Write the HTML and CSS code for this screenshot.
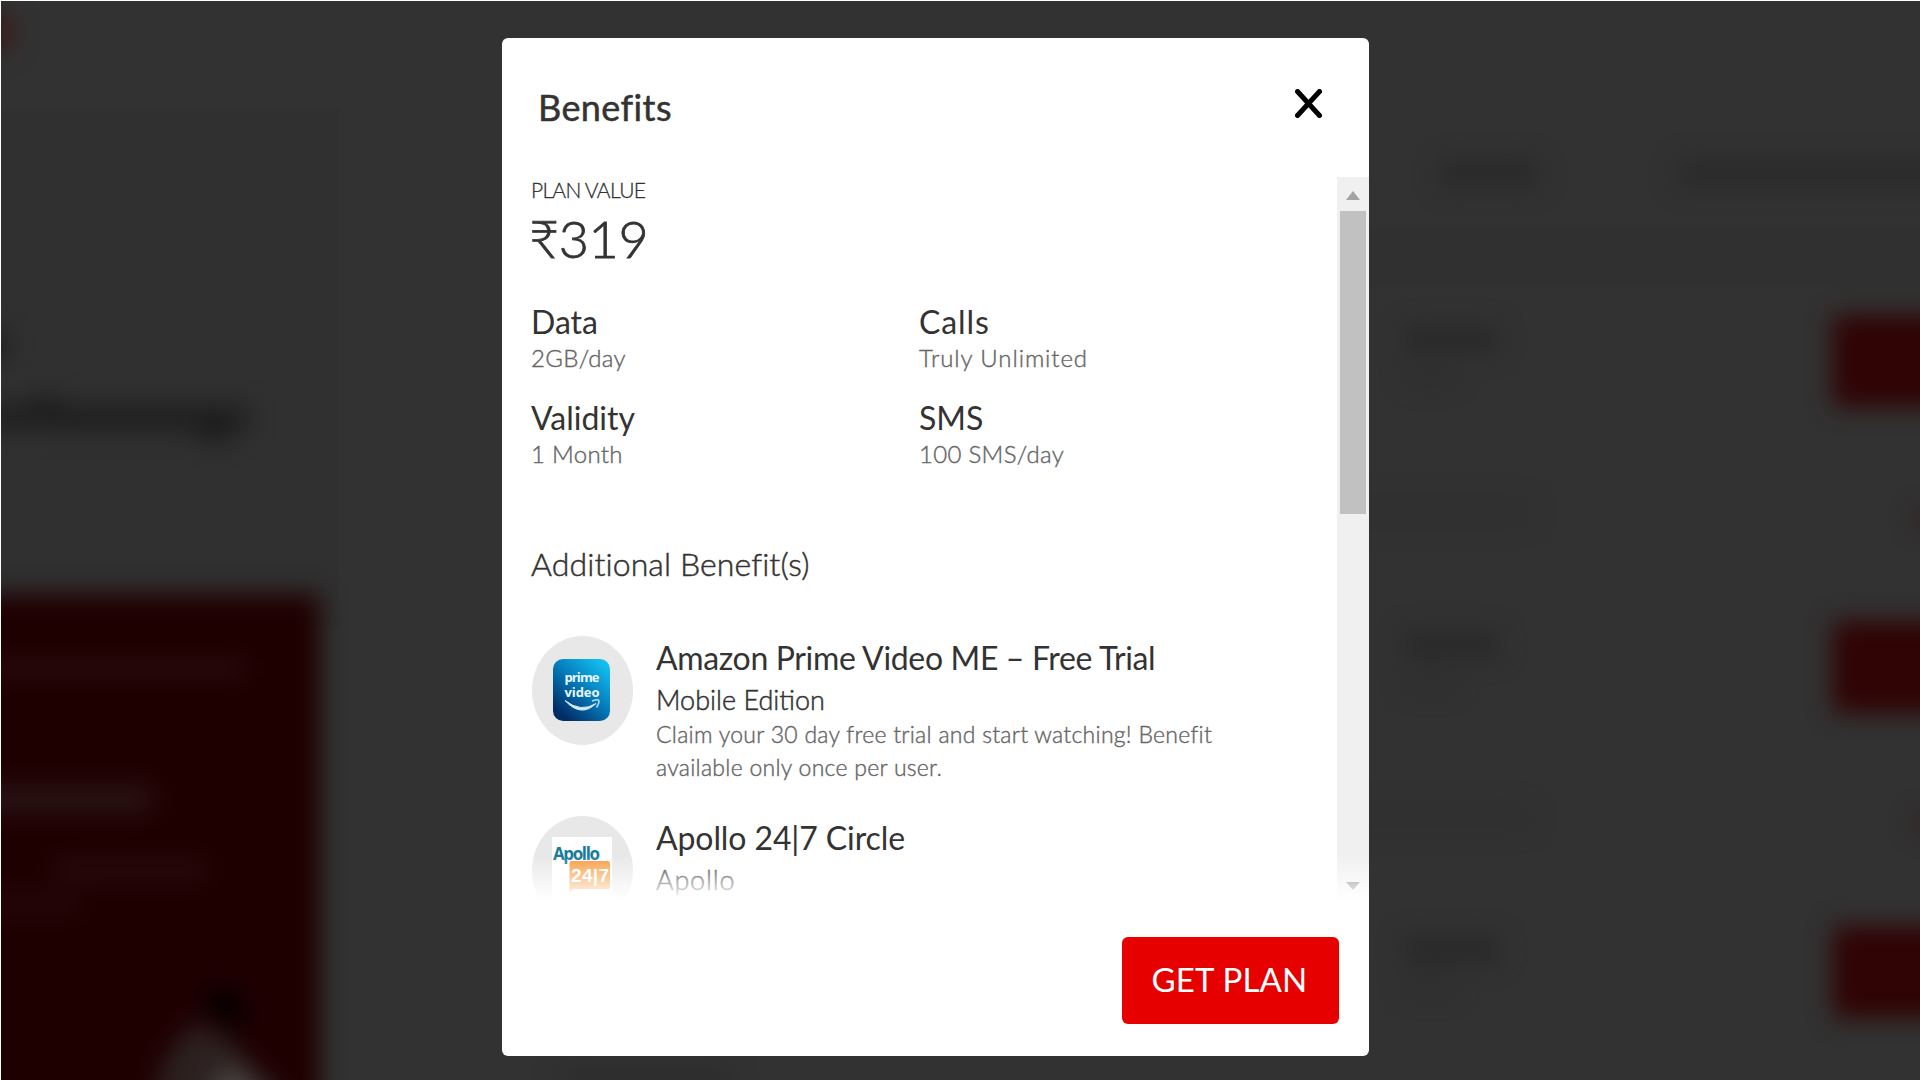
FILE: index.html
```
<!DOCTYPE html>
<html lang="en">
<head>
  <meta charset="UTF-8">
  <title>Benefits</title>
  <link rel="stylesheet" href="styles.css">
</head>
<body>

<!-- blurred page behind the modal -->
<svg class="backdrop" viewBox="0 0 1920 1080" aria-hidden="true">
  <defs>
    <filter id="blur" filterUnits="userSpaceOnUse" x="-60" y="-60" width="2040" height="1200" color-interpolation-filters="sRGB">
      <feGaussianBlur stdDeviation="12"/>
    </filter>
  </defs>
  <rect width="1920" height="1080" fill="#323232"/>
  <rect y="108" width="339" height="520" fill="#303030"/>
  <rect x="1369" y="227" width="551" height="60" fill="#303030"/>
  <g filter="url(#blur)">
    <circle cx="-8" cy="32" r="22" fill="#3c1a1a"/>
    <circle cx="-8" cy="345" r="15" fill="#1c1c1c"/>
    <rect x="-40" y="406" width="95" height="22" fill="#1e1e1e"/>
    <rect x="30" y="396" width="30" height="30" fill="#1e1e1e"/>
    <rect x="55" y="406" width="193" height="24" fill="#1e1e1e"/>
    <circle cx="215" cy="427" r="17" fill="#1c1c1c"/>
    <rect x="-60" y="594" width="380" height="560" fill="#1f0001"/>
    <rect x="-40" y="658" width="286" height="20" fill="#280a0c"/>
    <rect x="-40" y="786" width="192" height="26" fill="#2a1414"/>
    <rect x="55" y="860" width="150" height="20" fill="#280b0d"/>
    <rect x="-40" y="895" width="120" height="18" fill="#27080a"/>
    <path d="M202 990 L232 988 L250 1015 L235 1032 L208 1010 Z" fill="#060000"/>
    <path d="M150 1100 L168 1055 L195 1022 L228 1040 L288 1100 Z" fill="#2c2120"/>
    <path d="M195 1110 L230 1062 L280 1110 Z" fill="#484444"/>
    <rect x="1441" y="161" width="96" height="26" fill="#292929"/>
    <rect x="1678" y="161" width="300" height="26" fill="#2a2a2a"/>
    <rect x="1403" y="326" width="94" height="26" fill="#292929"/>
    <rect x="1408" y="368" width="45" height="14" fill="#2c2c2c"/>
    <rect x="1340" y="504" width="188" height="16" fill="#2e2e2e"/>
    <rect x="1403" y="632" width="96" height="26" fill="#292929"/>
    <rect x="1408" y="675" width="45" height="14" fill="#2c2c2c"/>
    <rect x="1340" y="810" width="188" height="16" fill="#2e2e2e"/>
    <rect x="1403" y="937" width="96" height="26" fill="#292929"/>
    <rect x="1408" y="979" width="45" height="14" fill="#2c2c2c"/>
    <rect x="560" y="1072" width="170" height="18" fill="#2a2a2a"/>
    <rect x="1833" y="315" width="180" height="92" fill="#300304"/>
    <rect x="1833" y="621" width="180" height="92" fill="#300304"/>
    <rect x="1833" y="926" width="180" height="92" fill="#300304"/>
    <circle cx="1924" cy="518" r="9" fill="#311717"/>
    <circle cx="1924" cy="823" r="9" fill="#311717"/>
  </g>
  <path d="M0 .5H1920M.5 0V1080" stroke="#fff"/>
</svg>

<div class="modal">
  <div class="modal-header">
    <h2>Benefits</h2>
    <button class="close" aria-label="Close">
      <svg width="27" height="29" viewBox="0 0 27 29">
        <path d="M2.5 2.5 L24.5 26.5 M24.5 2.5 L2.5 26.5" stroke="#000" stroke-width="5" stroke-linecap="round"/>
      </svg>
    </button>
  </div>

  <div class="modal-body">
    <div class="content">
      <p class="plan-label">PLAN VALUE</p>
      <p class="plan-price">₹319</p>

      <div class="details">
        <div>
          <h3>Data</h3>
          <p>2GB/day</p>
        </div>
        <div>
          <h3 class="wide">Calls</h3>
          <p class="wide">Truly Unlimited</p>
        </div>
        <div>
          <h3>Validity</h3>
          <p>1 Month</p>
        </div>
        <div>
          <h3>SMS</h3>
          <p>100 SMS/day</p>
        </div>
      </div>

      <p class="additional">Additional Benefit(s)</p>

      <div class="benefit">
        <div class="benefit-icon">
          <svg width="57" height="62" viewBox="0 0 57 62">
            <defs>
              <linearGradient id="prime" x1="0.15" y1="0.9" x2="0.85" y2="0.05">
                <stop offset="0" stop-color="#012c66"/>
                <stop offset="0.5" stop-color="#0579b8"/>
                <stop offset="1" stop-color="#12bdf0"/>
              </linearGradient>
            </defs>
            <rect width="57" height="62" rx="10" fill="url(#prime)"/>
            <text class="prime-text" x="29" y="23" textLength="35">prime</text>
            <text class="prime-text" x="29" y="38" textLength="35">video</text>
            <path d="M12 41.500 Q28 54 43 44.500 Q28 59 12 41.500 Z" fill="#d3ecfa" stroke="#d3ecfa" stroke-width="1"/>
            <path d="M39 42 Q46 39.500 46 42 Q46 45 43.500 48.500" fill="none" stroke="#b9dcf2" stroke-width="1.6"/>
          </svg>
        </div>
        <div class="benefit-text">
          <h4 class="tight">Amazon Prime Video ME – Free Trial</h4>
          <p class="sub">Mobile Edition</p>
          <p class="desc">Claim your 30 day free trial and start watching! Benefit<br>available only once per user.</p>
        </div>
      </div>

      <div class="benefit">
        <div class="benefit-icon">
          <svg width="60" height="66" viewBox="0 0 60 66">
            <rect width="60" height="66" fill="#fff"/>
            <text class="apollo-text" x="1" y="23" textLength="47">Apollo</text>
            <path d="M20 24 H56 Q58 24 58 26 V50 Q58 52 56 52 H21 L17.500 55 V26 Q17.500 24 20 24 Z" fill="#f7993c"/>
            <text class="apollo-num" x="19" y="45" textLength="38">24|7</text>
          </svg>
        </div>
        <div class="benefit-text">
          <h4>Apollo 24|7 Circle</h4>
          <p class="sub wide">Apollo</p>
        </div>
      </div>
    </div>

    <div class="scrollbar">
      <svg width="14" height="9" viewBox="0 0 14 9"><path d="M0 9 L7 0 L14 9 Z" fill="#a3a3a3"/></svg>
      <div class="thumb"></div>
      <svg width="14" height="8" viewBox="0 0 14 8"><path d="M0 0 H14 L7 8 Z" fill="#707070"/></svg>
    </div>
    <div class="fade"></div>
  </div>

  <div class="modal-footer">
    <button class="get-plan">GET PLAN</button>
  </div>
</div>

</body>
</html>
```
FILE: styles.css
```
* {
  box-sizing: border-box;
}

body {
  margin: 0;
  height: 100vh;
  overflow: hidden;
  background-color: #323232;
  font-family: Lato, sans-serif;
  color: #333;
}

h2, h3, h4, p {
  margin: 0;
  font-weight: 400;
}

button {
  border: none;
  font-family: inherit;
  cursor: pointer;
}

svg {
  display: block;
}

.backdrop {
  position: absolute;
  top: 0;
  left: 0;
  width: 1920px;
  height: 1080px;
}

.modal {
  position: relative;
  width: 867px;
  height: 1018px;
  margin: 38px 0 0 502px;
  background: white;
  border-radius: 6px;
  display: flex;
  flex-direction: column;
}

.modal-header {
  display: flex;
  justify-content: space-between;
  align-items: flex-start;
  height: 139px;
  padding: 48px 47px 0 36px;
}

.modal-header h2 {
  padding-top: 1px;
  font-size: 36px;
  line-height: 40px;
  letter-spacing: 0.4px;
  -webkit-text-stroke: 0.5px #333;
}

.close {
  background: none;
  padding: 3px 0 0;
}

.modal-body {
  position: relative;
  display: flex;
  height: 723px;
  overflow: hidden;
}

.content {
  flex: 1;
  padding: 1px 0 0 29px;
}

.plan-label {
  font-size: 21px;
  line-height: 24px;
  font-weight: 300;
  letter-spacing: -0.7px;
  -webkit-text-stroke: 0.3px #333;
}

.plan-price {
  margin: 6px 0 0 -2px;
  font-size: 52px;
  line-height: 60px;
  font-weight: 300;
  letter-spacing: -0.3px;
  -webkit-text-stroke: 0.8px #333;
}

.details {
  display: grid;
  grid-template-columns: 388px 1fr;
  row-gap: 28px;
  margin-top: 36px;
}

.details h3 {
  font-size: 32px;
  line-height: 36px;
}

.details p {
  margin-top: 4px;
  font-size: 24px;
  line-height: 28px;
  letter-spacing: 0.3px;
  font-weight: 300;
  color: #666;
  -webkit-text-stroke: 0.4px #666;
}

.details .wide {
  letter-spacing: 0.9px;
}

.additional {
  margin: 78px 0 54px;
  font-size: 32px;
  line-height: 36px;
  font-weight: 300;
  letter-spacing: 0.1px;
  -webkit-text-stroke: 0.5px #333;
}

.benefit {
  display: flex;
  gap: 23px;
  margin-bottom: 32px;
}

.benefit-icon {
  flex: none;
  display: flex;
  justify-content: center;
  align-items: center;
  width: 101px;
  height: 109px;
  margin-left: 1px;
  padding: 0 2px 1px 0;
  border-radius: 50%;
  background: #e8e8e8;
}

.benefit-text {
  padding-top: 4px;
}

.benefit h4 {
  font-size: 32px;
  line-height: 36px;
  letter-spacing: -0.1px;
}

.benefit .tight {
  letter-spacing: -0.35px;
}

.benefit .sub {
  margin-top: 8px;
  font-size: 27px;
  line-height: 32px;
  font-weight: 300;
  -webkit-text-stroke: 0.5px #333;
}

.benefit .wide {
  letter-spacing: 0.8px;
}

.benefit .desc {
  margin-top: 2px;
  font-size: 23px;
  line-height: 33px;
  font-weight: 300;
  letter-spacing: 0.27px;
  color: #666;
  -webkit-text-stroke: 0.4px #666;
}

.prime-text {
  font: 700 13px/1 "Open Sans", sans-serif;
  fill: #e8f7ff;
  text-anchor: middle;
}

.apollo-text {
  font: 700 17px "Open Sans", sans-serif;
  fill: #15799b;
}

.apollo-num {
  font: 700 19px "Liberation Sans", sans-serif;
  fill: white;
}

.scrollbar {
  display: flex;
  flex-direction: column;
  align-items: center;
  width: 32px;
  padding: 14px 0 10px;
  background: #f0f0f0;
}

.thumb {
  width: 26px;
  height: 303px;
  margin: 11px 0 auto;
  background: #c1c1c1;
}

.fade {
  position: absolute;
  left: 0;
  right: 0;
  bottom: 0;
  height: 45px;
  background: linear-gradient(rgba(255, 255, 255, 0), white);
}

.modal-footer {
  display: flex;
  justify-content: flex-end;
  padding: 37px 30px 0;
}

.get-plan {
  width: 217px;
  height: 87px;
  padding: 0 2px 4px 0;
  border-radius: 6px;
  background: #e60000;
  color: white;
  font-size: 33px;
  letter-spacing: 0.2px;
}
```
